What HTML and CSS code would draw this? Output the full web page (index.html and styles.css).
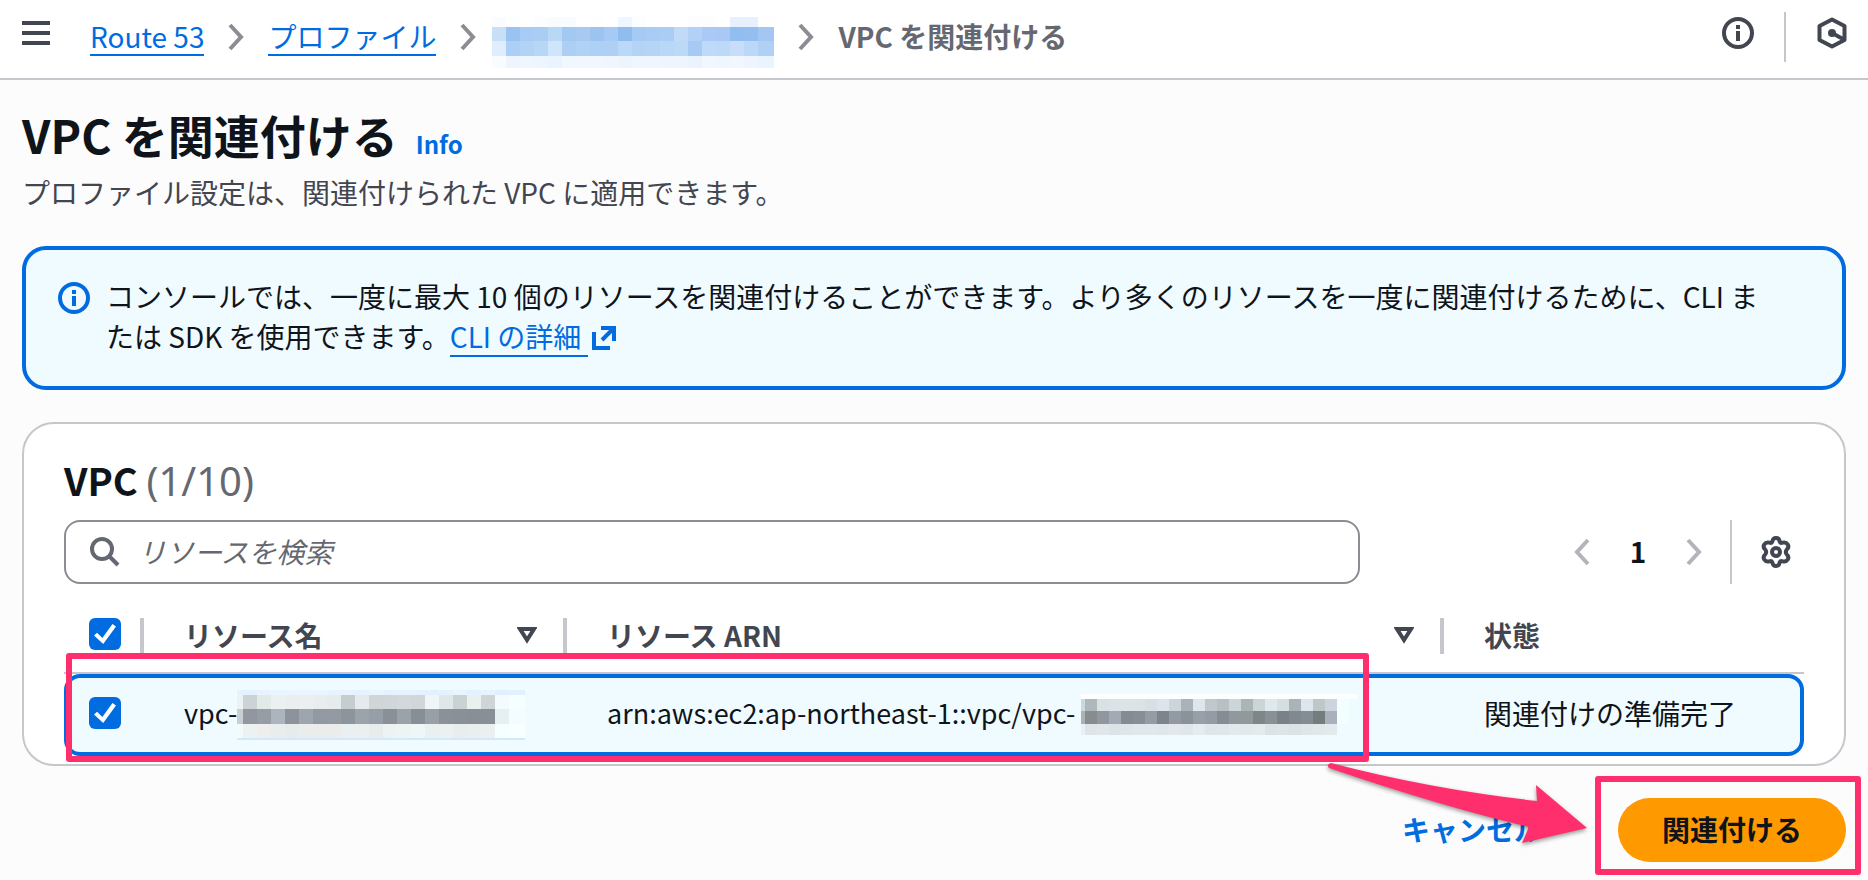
FILE: index.html
```html
<!doctype html>
<html lang="ja">
  <head>
    <meta charset="UTF-8" />
    <meta name="viewport" content="width=device-width, initial-scale=1" />
    <title>VPC を関連付ける</title>
    <link rel="stylesheet" href="styles.css">
  </head>
  <body>
    <header class="topbar">
      <button type="button" class="icon-button menu-button" aria-label="メニュー">
        <svg width="28" height="24" viewBox="0 0 28 24"><path d="M0 2h28M0 12h28M0 22h28" /></svg>
      </button>
      <nav class="breadcrumbs" aria-label="パンくずリスト">
        <a href="#">Route 53</a>
        <svg class="chevron" width="16" height="28" viewBox="0 0 16 28"><path d="M2 2l11 12L2 26" /></svg>
        <a href="#">プロファイル</a>
        <svg class="chevron" width="16" height="28" viewBox="0 0 16 28"><path d="M2 2l11 12L2 26" /></svg>
        <a href="#" class="masked-link" aria-label="プロファイル名"><svg class="mosaic" id="mosaic_profile" width="282" height="52"></svg></a>
        <svg class="chevron" width="16" height="28" viewBox="0 0 16 28"><path d="M2 2l11 12L2 26" /></svg>
        <span class="current">VPC を関連付ける</span>
      </nav>
      <div class="tools">
        <button type="button" class="icon-button" aria-label="情報">
          <svg width="32" height="32" viewBox="0 0 32 32">
            <circle cx="16" cy="16" r="14" />
            <path d="M16 8v4M16 14v10" />
          </svg>
        </button>
        <span class="tools-divider"></span>
        <button type="button" class="icon-button" aria-label="診断">
          <svg width="32" height="32" viewBox="0 0 32 32">
            <path d="M16 2.500l12.500 6.500v14L16 29.500 3.500 23V9z" stroke-linejoin="round" />
            <path d="M16 16l11 6" />
            <circle class="dot" cx="16" cy="16" r="4" />
          </svg>
        </button>
      </div>
    </header>

    <main class="content">
      <div class="page-title">
        <h1>VPC を関連付ける</h1>
        <a href="#" class="info-link">Info</a>
      </div>
      <p class="description">プロファイル設定は、関連付けられた VPC に適用できます。</p>

      <div class="alert">
        <svg class="alert-icon" width="32" height="32" viewBox="0 0 32 32">
          <circle cx="16" cy="16" r="14" />
          <path d="M16 8v4M16 14v10" />
        </svg>
        <p>
          コンソールでは、一度に最大 10 個のリソースを関連付けることができます。より多くのリソースを一度に関連付けるために、CLI または SDK を使用できます。<a href="#">CLI の詳細 </a><svg class="external" width="24" height="24" viewBox="0 0 24 24"><path d="M2 6v16h16" /><path d="M9 2h13v13M22 2L10 14" /></svg>
        </p>
      </div>

      <section class="panel">
        <h2>VPC <span>(1/10)</span></h2>
        <div class="toolbar">
          <label class="search">
            <svg width="30" height="30" viewBox="0 0 30 30"><circle cx="12" cy="12" r="10" /><path d="M19 19l9 9" /></svg>
            <input type="text" placeholder="リソースを検索" aria-label="リソースを検索" />
          </label>
          <div class="pagination">
            <button type="button" class="icon-button page-arrow" aria-label="前のページ">
              <svg width="16" height="28" viewBox="0 0 16 28"><path d="M14 2L3 14l11 12" /></svg>
            </button>
            <button type="button" class="page-number">1</button>
            <button type="button" class="icon-button page-arrow" aria-label="次のページ">
              <svg width="16" height="28" viewBox="0 0 16 28"><path d="M2 2l11 12L2 26" /></svg>
            </button>
          </div>
          <button type="button" class="icon-button settings" aria-label="設定">
            <svg width="32" height="32" viewBox="0 0 32 32">
              <path stroke-linejoin="round" d="M12.500 5Q13 2 16 2t3.500 3q.500 2.500 3 1.700 3.500-1 5.300 1.800 1.500 3-1 5-2 2.500 0 5 2.500 2 1 5-1.800 2.800-5.300 1.800-2.500-.800-3 1.700-.500 3-3.500 3t-3.500-3q-.500-2.500-3-1.700-3.500 1-5.300-1.800-1.500-3 1-5 2-2.500 0-5-2.500-2-1-5Q6 5.700 9.500 6.700q2.500.800 3-1.700z" />
              <circle cx="16" cy="16" r="4" />
            </svg>
          </button>
        </div>

        <table class="resources">
          <colgroup>
            <col class="col-select" />
            <col class="col-name" />
            <col class="col-arn" />
            <col class="col-status" />
          </colgroup>
          <thead>
            <tr>
              <th><div class="head-cell head-select"><input type="checkbox" checked aria-label="すべて選択" /></div></th>
              <th>
                <div class="head-cell">リソース名
                  <svg width="20" height="18" viewBox="0 0 20 18"><path d="M3 3h14l-7 11z" /></svg>
                </div>
              </th>
              <th>
                <div class="head-cell">リソース ARN
                  <svg width="20" height="18" viewBox="0 0 20 18"><path d="M3 3h14l-7 11z" /></svg>
                </div>
              </th>
              <th><div class="head-cell">状態</div></th>
            </tr>
          </thead>
          <tbody>
            <tr>
              <td><div class="cell cell-select"><input type="checkbox" checked aria-label="VPC を選択" /></div></td>
              <td><div class="cell cell-id"><span>vpc-</span><svg class="mosaic" id="mosaic_name" width="288" height="50"></svg></div></td>
              <td><div class="cell cell-id cell-arn"><span>arn:aws:ec2:ap-northeast-1::vpc/vpc-</span><svg class="mosaic" id="mosaic_arn" width="276" height="42"></svg></div></td>
              <td><div class="cell"><span>関連付けの準備完了</span></div></td>
            </tr>
          </tbody>
        </table>
      </section>

      <div class="actions">
        <button type="button" class="cancel">キャンセル</button>
        <button type="button" class="primary">関連付ける</button>
      </div>
    </main>

    <!-- callouts drawn over the console -->
    <svg class="callouts" width="1868" height="880" viewBox="0 0 1868 880">
      <rect x="69" y="656" width="1297" height="103" />
      <rect x="1598" y="779" width="260" height="93" />
      <path d="M1331 763Q1430 789 1537 801L1536 785 1587 828 1522 843 1529 827Q1440 806 1329 768 1326 764 1331 763z" />
    </svg>

    <script>
      // each row: [top, height, colors]; columns start at the given x positions
      function drawMosaic(id, start, step, rows) {
        const svg = document.getElementById(id);
        const full = svg.getAttribute("width");
        rows.forEach(([y, h, colors]) => {
          const list = colors.split(" ");
          list.forEach((color, i) => {
            const x = i === 0 ? 0 : start + (i - 1) * step;
            const right = i === list.length - 1 ? full : start + i * step;
            const rect = document.createElementNS("http://www.w3.org/2000/svg", "rect");
            rect.setAttribute("x", x);
            rect.setAttribute("y", y);
            rect.setAttribute("width", right - x);
            rect.setAttribute("height", h);
            rect.setAttribute("fill", "#" + color);
            svg.appendChild(rect);
          });
        });
      }

      drawMosaic("mosaic_profile", 14, 14, [
        [0, 10, "fafcff fcfeff ffffff fcfdff f8fcff f8fbff ffffff fefeff ffffff f0f6ff fcfdff ffffff ffffff ffffff fcfdff fcfdff ffffff e8f0fd e8f0fd fefeff"],
        [10, 14, "c9dff8 9bc3f1 a8ccf3 a9cdf3 bad7f5 a2c9f2 a8caf2 9dc4f1 a6caf3 90bdf0 a5caf3 a9ccf4 a9cdf4 c0daf8 b3d1f6 aacaf5 a9c8f5 92bdf1 94bdf0 a3c7f2"],
        [24, 15, "e0edfc acd0f5 b0d3f6 b8d7f7 cfe5fb adcff4 b0d2f5 add0f5 b0cff5 bad9f8 b3d4f6 b5d4f6 b9d8f7 bcd9f7 a6caf3 bfdaf8 bdd9f8 c8ddf9 bcd8f8 b0d1f5"],
        [39, 12, "f8fcff eff5fe f0f6fe edf5fe e9f4fe eff7ff f1f6ff f1f6ff f0f5ff ecf5fe eef6ff eff6ff edf5ff edf5ff ebf4fe f0f7ff eef6ff f1f6ff eef5ff eaf4fe"],
      ]);
      drawMosaic("mosaic_name", 6, 14, [
        [0, 5, "e6f3ff e4f2fe e7f4ff e9f6ff e9f5ff e9f6ff e9f6ff e7f4ff e7f4ff e4f2fe e8f5ff e5f3ff e6f3ff e6f3ff e2f1fe e4f2fe e8f5ff e3f2ff e5f3ff e0f0fe e2f1fe"],
        [5, 14, "edf3f4 cbd3d5 e2eae8 ebf0f1 eaeeef ebeff0 e9edee e6ebec c6cdcf e6eaed d0d6d8 d1d6d9 d4d8da d1d7d9 f0f6f7 e0e7e9 cbd2d4 e9f0ee cfd5d7 f4fbff f6ffff"],
        [19, 15, "c7cfd3 9296a0 979da5 acb4bd 8c939b 9da5ad 9299a1 939aa2 8c949c 9ba3ab 979ea7 899098 9ba2aa 868e96 999fa8 8a9199 8a9098 898f97 898f97 e6f0f3 f3fdff"],
        [34, 14, "f3fafb ecf1f2 efeeed e9edee e6ecec e9edec eaedec ebedec e9f0f1 ebefef e9ecec edf2f2 eef3f3 eff6f7 eaeff0 ebf0f1 e9eeed e9efee ecefef f5ffff f8ffff"],
        [48, 2, "d2e8fc"],
      ]);
      drawMosaic("mosaic_arn", 4, 12, [
        [0, 5, "fdffff"],
        [5, 12, "cbd8dd aeb7bb dae1e5 dbe3e7 dce4e8 dbe3e7 d9e0e5 dce5ea cbd5da a9b3b8 dce6eb c1c8cb b7c0c5 ccd5da aab5b8 ccd5d6 dee9ed d4dfe2 aab4b8 dce6eb bec8cb ced4df f0ffff eefcff"],
        [17, 13, "acb2b6 878c8f 91979e a3a9b5 858b92 878e96 959ca4 7d848b 939aa3 8b929a 989fa7 949ba4 858c94 91989e 929999 7e868a 899197 7a8188 81888f 858c94 747c7e a9b1bd f3ffff eefbff"],
        [30, 11, "eaf1f4 dee4e7 e0e7ea dce4e8 dfe6e9 e1e7ea e1e8eb e0e7ea e2e8eb e0e7eb e5ecef dee6ea dfe7ea e2eaed e2e9ec e4ebed dce3e6 dee5e7 dbe3e7 dee6e8 e0e8ea e2eaed eefcff effbff"],
      ]);
    </script>
  </body>
</html>
```

FILE: styles.css
```css
* {
  box-sizing: border-box;
}
body {
  margin: 0;
  font-family: "Noto Sans CJK JP", "Noto Sans", sans-serif;
  font-size: 28px;
  line-height: 40px;
  color: #0f141a;
  background: #fcfcfd;
  position: relative;
}
h1,
h2,
p {
  margin: 0;
}
a {
  color: #006ce0;
}
svg {
  flex-shrink: 0;
  fill: none;
  stroke: currentColor;
  stroke-width: 4;
}
button {
  padding: 0;
  border: none;
  background: none;
  font: inherit;
  color: inherit;
  cursor: pointer;
}
.icon-button {
  display: flex;
  align-items: center;
  color: #424650;
}
.mosaic {
  stroke: none;
  shape-rendering: crispEdges;
}

/* top bar */
.topbar {
  display: flex;
  height: 80px;
  padding: 0 20px 0 22px;
  background: #fff;
  border-bottom: 2px solid #c6c6cd;
}
.menu-button {
  height: 66px;
  margin-right: 40px;
}
.breadcrumbs {
  display: flex;
  align-items: center;
  gap: 24px;
  height: 74px;
}
.breadcrumbs a:not(.masked-link) {
  line-height: 36px;
  border-bottom: 2px solid #006ce0;
  text-decoration: none;
}
.masked-link {
  display: flex;
  margin: 12px 0 0 -8px;
}
.chevron {
  color: #8c8c94;
}
.current {
  padding-bottom: 2px;
  font-weight: bold;
  color: #656871;
}
.tools {
  display: flex;
  align-items: center;
  gap: 30px;
  height: 66px;
  margin-left: auto;
}
.tools-divider {
  width: 2px;
  height: 50px;
  margin-top: 8px;
  background: #c6c6cd;
}
.dot {
  fill: currentColor;
  stroke: none;
}

/* page body */
.content {
  padding: 24px 22px 18px;
}
.page-title {
  display: flex;
  align-items: baseline;
  gap: 18px;
}
h1 {
  font-size: 46px;
  line-height: 60px;
}
.info-link {
  font-size: 24px;
  font-weight: bold;
  text-decoration: none;
}
.description {
  margin: 8px 0 34px;
  color: #424650;
}
.alert {
  display: flex;
  gap: 16px;
  padding: 26px 80px 26px 32px;
  min-height: 144px;
  color: #0f141a;
  background: #f0fbff;
  border: 4px solid #006ce0;
  border-radius: 24px;
}
.alert-icon {
  margin-top: 6px;
  color: #006ce0;
}
.alert a {
  display: inline-block;
  line-height: 38px;
  border-bottom: 2px solid #006ce0;
  text-decoration: none;
  white-space: pre;
}
.external {
  margin-left: 4px;
  vertical-align: -2px;
  color: #006ce0;
}

/* resource table */
.panel {
  margin-top: 32px;
  padding: 32px 40px 8px;
  background: #fff;
  border: 2px solid #c6c6cd;
  border-radius: 32px;
}
h2 {
  font-size: 38px;
  line-height: 48px;
}
h2 span {
  font-family: "Noto Sans", sans-serif;
  font-size: 40px;
  line-height: 40px;
  font-weight: normal;
  color: #656871;
}
.toolbar {
  display: flex;
  align-items: center;
  margin-top: 16px;
}
.search {
  display: flex;
  flex: 0 1 1296px;
  align-items: center;
  gap: 18px;
  height: 64px;
  padding: 0 24px;
  color: #656871;
  border: 2px solid #8c8c94;
  border-radius: 16px;
}
.search input {
  flex: 1;
  min-width: 0;
  padding: 0 0 2px;
  border: none;
  outline: none;
  background: none;
  font: inherit;
  color: #0f141a;
}
.search input::placeholder {
  color: #656871;
  font-style: italic;
  opacity: 1;
}
.pagination {
  display: flex;
  align-items: center;
  gap: 38px;
  margin-left: auto;
  padding-right: 28px;
}
.page-arrow {
  color: #b4b4bb;
}
.page-number {
  width: 20px;
  padding-bottom: 2px;
  font-weight: bold;
}
.settings {
  height: 64px;
  padding: 0 12px 0 28px;
  border-left: 2px solid #c6c6cd;
}
.resources {
  width: 100%;
  margin-top: 16px;
  table-layout: fixed;
  border-spacing: 0;
}
.col-select {
  width: 80px;
}
.col-name {
  width: 423px;
}
.col-status {
  width: 360px;
}
th,
td {
  padding: 0;
  text-align: left;
}
th {
  padding: 18px 0;
  border-bottom: 2px solid #c6c6cd;
  color: #424650;
}
.head-cell {
  display: flex;
  align-items: center;
  justify-content: space-between;
  height: 36px;
  padding: 0 26px 2px 40px;
  border-right: 4px solid #c6c6cd;
}
.head-cell.head-select {
  padding: 0 0 4px 25px;
}
th:last-child .head-cell {
  border-right: none;
}
td {
  background: #f0fbff;
  border: solid #006ce0;
  border-width: 4px 0;
}
td:first-child {
  border-left-width: 4px;
  border-radius: 16px 0 0 16px;
}
td:last-child {
  border-right-width: 4px;
  border-radius: 0 16px 16px 0;
}
.cell {
  display: flex;
  align-items: center;
  height: 74px;
  padding-left: 40px;
}
.cell span {
  padding-bottom: 4px;
}
.cell.cell-select {
  padding: 0 0 4px 21px;
}
.cell-id {
  font-size: 27px;
}
.cell-arn {
  gap: 6px;
}
input[type="checkbox"] {
  appearance: none;
  display: grid;
  place-content: center;
  width: 32px;
  height: 32px;
  margin: 0;
  background: #006ce0;
  border-radius: 6px;
}
input[type="checkbox"]:checked::before {
  content: "";
  width: 22px;
  height: 20px;
  background: #fff;
  clip-path: polygon(0 58%, 14% 44%, 38% 70%, 84% 0, 100% 12%, 42% 100%);
}

/* footer actions */
.actions {
  display: flex;
  justify-content: flex-end;
  gap: 32px;
  margin-top: 32px;
  font-weight: bold;
}
.cancel {
  padding: 0 44px 2px;
  color: #006ce0;
}
.primary {
  height: 64px;
  padding: 0 44px 2px;
  background: #ff9900;
  border-radius: 40px;
}
.callouts {
  position: absolute;
  top: 0;
  left: 0;
  stroke: #ff2f6e;
  stroke-width: 6;
  stroke-linejoin: round;
  pointer-events: none;
}
.callouts path {
  fill: #ff2f6e;
  stroke: none;
  filter: drop-shadow(0 2px 2px rgba(0, 0, 0, 0.4));
}
```
